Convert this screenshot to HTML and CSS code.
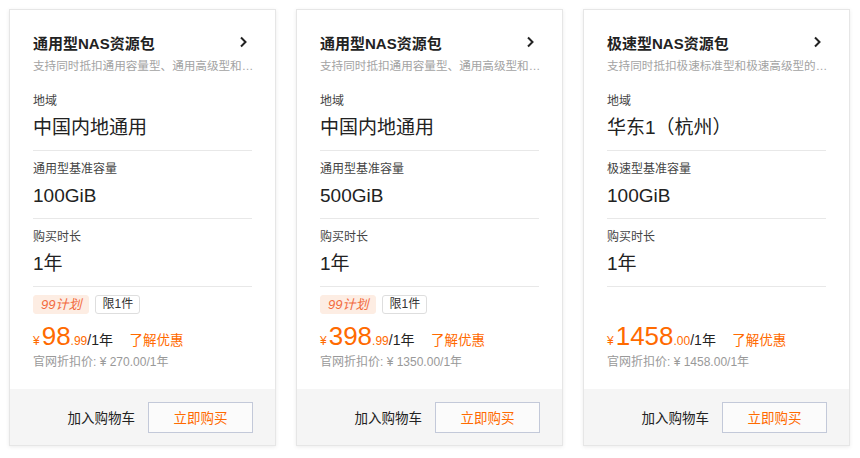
FILE: index.html
```html
<!DOCTYPE html>
<html lang="zh-CN">
<head>
    <meta charset="UTF-8">
    <meta name="viewport" content="width=device-width, initial-scale=1.0">
    <title>NAS资源包</title>
    <link rel="stylesheet" href="styles.css">
</head>
<body>
    <div id="card-list">
        <div class="card">
            <div class="card-body">
                <div class="card-head">
                    <h3 class="card-title">通用型NAS资源包</h3>
                    <svg class="arrow" width="10" height="12" viewBox="0 0 10 12"><polyline points="3,1.5 7.5,6 3,10.5" fill="none" stroke="#222" stroke-width="2"/></svg>
                </div>
                <p class="card-desc">支持同时抵扣通用容量型、通用高级型和…</p>
                <div class="spec">
                    <div class="spec-label">地域</div>
                    <div class="spec-value">中国内地通用</div>
                </div>
                <div class="spec">
                    <div class="spec-label">通用型基准容量</div>
                    <div class="spec-value">100GiB</div>
                </div>
                <div class="spec">
                    <div class="spec-label">购买时长</div>
                    <div class="spec-value">1年</div>
                </div>
                <div class="tags">
                    <span class="tag tag-plan">99计划</span>
                    <span class="tag">限1件</span>
                </div>
                <div class="price">
                    <span class="cur">¥</span><span class="big">98</span><span class="cents">.99</span><span class="unit">/1年</span>
                    <a class="promo" href="#">了解优惠</a>
                </div>
                <div class="old-price">官网折扣价: ¥ 270.00/1年</div>
            </div>
            <div class="card-foot">
                <span class="cart">加入购物车</span>
                <button class="buy">立即购买</button>
            </div>
        </div>

        <div class="card">
            <div class="card-body">
                <div class="card-head">
                    <h3 class="card-title">通用型NAS资源包</h3>
                    <svg class="arrow" width="10" height="12" viewBox="0 0 10 12"><polyline points="3,1.5 7.5,6 3,10.5" fill="none" stroke="#222" stroke-width="2"/></svg>
                </div>
                <p class="card-desc">支持同时抵扣通用容量型、通用高级型和…</p>
                <div class="spec">
                    <div class="spec-label">地域</div>
                    <div class="spec-value">中国内地通用</div>
                </div>
                <div class="spec">
                    <div class="spec-label">通用型基准容量</div>
                    <div class="spec-value">500GiB</div>
                </div>
                <div class="spec">
                    <div class="spec-label">购买时长</div>
                    <div class="spec-value">1年</div>
                </div>
                <div class="tags">
                    <span class="tag tag-plan">99计划</span>
                    <span class="tag">限1件</span>
                </div>
                <div class="price">
                    <span class="cur">¥</span><span class="big">398</span><span class="cents">.99</span><span class="unit">/1年</span>
                    <a class="promo" href="#">了解优惠</a>
                </div>
                <div class="old-price">官网折扣价: ¥ 1350.00/1年</div>
            </div>
            <div class="card-foot">
                <span class="cart">加入购物车</span>
                <button class="buy">立即购买</button>
            </div>
        </div>

        <div class="card">
            <div class="card-body">
                <div class="card-head">
                    <h3 class="card-title">极速型NAS资源包</h3>
                    <svg class="arrow" width="10" height="12" viewBox="0 0 10 12"><polyline points="3,1.5 7.5,6 3,10.5" fill="none" stroke="#222" stroke-width="2"/></svg>
                </div>
                <p class="card-desc">支持同时抵扣极速标准型和极速高级型的…</p>
                <div class="spec">
                    <div class="spec-label">地域</div>
                    <div class="spec-value">华东1（杭州）</div>
                </div>
                <div class="spec">
                    <div class="spec-label">极速型基准容量</div>
                    <div class="spec-value">100GiB</div>
                </div>
                <div class="spec">
                    <div class="spec-label">购买时长</div>
                    <div class="spec-value">1年</div>
                </div>
                <div class="tags"></div>
                <div class="price">
                    <span class="cur">¥</span><span class="big">1458</span><span class="cents">.00</span><span class="unit">/1年</span>
                    <a class="promo" href="#">了解优惠</a>
                </div>
                <div class="old-price">官网折扣价: ¥ 1458.00/1年</div>
            </div>
            <div class="card-foot">
                <span class="cart">加入购物车</span>
                <button class="buy">立即购买</button>
            </div>
        </div>
    </div>
</body>
</html>
```

FILE: styles.css
```css
body {
    margin: 0;
    padding: 9px;
    background-color: #fff;
    font-family: "Liberation Sans", "Noto Sans CJK SC", sans-serif;
    color: #333;
}
#card-list {
    display: flex;
    gap: 20px;
}
.card {
    width: 267px;
    height: 437px;
    box-sizing: border-box;
    border: 1px solid #e6e6e6;
    box-shadow: 0 1px 4px rgba(0, 0, 0, 0.08);
    display: flex;
    flex-direction: column;
    background-color: #fff;
}
.card-body {
    padding: 20px 23px 0 23px;
}
.card-head {
    height: 24px;
    display: flex;
    justify-content: space-between;
    align-items: center;
}
.card-title {
    margin: 0;
    font-size: 15px;
    font-weight: bold;
    color: #222;
}
.arrow {
    margin-right: 4px;
}
.card-desc {
    margin: 2px 0 7px 0;
    height: 20px;
    line-height: 20px;
    font-size: 11.6px;
    color: #a3a3a3;
    white-space: nowrap;
}
.spec {
    padding: 9px 0 8px 0;
    border-bottom: 1px solid #e8e8e8;
}
.spec-label {
    height: 18px;
    line-height: 18px;
    font-size: 12px;
    color: #444;
}
.spec-value {
    margin-top: 4px;
    height: 28px;
    line-height: 28px;
    font-size: 19px;
    color: #222;
}
.tags {
    height: 19px;
    margin-top: 8px;
    display: flex;
    gap: 6px;
}
.tag {
    height: 19px;
    line-height: 17px;
    padding: 0 6px;
    box-sizing: border-box;
    border: 1px solid #dedede;
    border-radius: 3px;
    font-size: 12px;
    color: #333;
}
.tag-plan {
    background-color: #fdede3;
    border-color: #fdede3;
    color: #f26a3d;
    font-style: italic;
    font-size: 13px;
    padding: 0 7px;
}
.price {
    margin-top: 7px;
    height: 30px;
    line-height: 30px;
    color: #ff6a00;
    white-space: nowrap;
}
.cur {
    font-size: 12px;
    margin-right: 2px;
}
.big {
    font-size: 26px;
}
.cents {
    font-size: 12px;
}
.unit {
    font-size: 14px;
    color: #222;
}
.promo {
    margin-left: 12px;
    font-size: 13.5px;
    color: #ff6a00;
    text-decoration: none;
}
.old-price {
    margin-top: 2px;
    height: 18px;
    line-height: 18px;
    font-size: 12px;
    color: #999;
}
.card-foot {
    margin-top: auto;
    height: 56px;
    background-color: #f5f5f5;
    display: flex;
    justify-content: flex-end;
    align-items: center;
    gap: 13px;
    padding-right: 22px;
}
.cart {
    font-size: 13.5px;
    color: #222;
}
.buy {
    width: 105px;
    height: 31px;
    border: 1px solid #c3c9d9;
    background-color: #fbfbfb;
    color: #ff6a00;
    font-family: inherit;
    font-size: 13.5px;
    cursor: pointer;
}
```
